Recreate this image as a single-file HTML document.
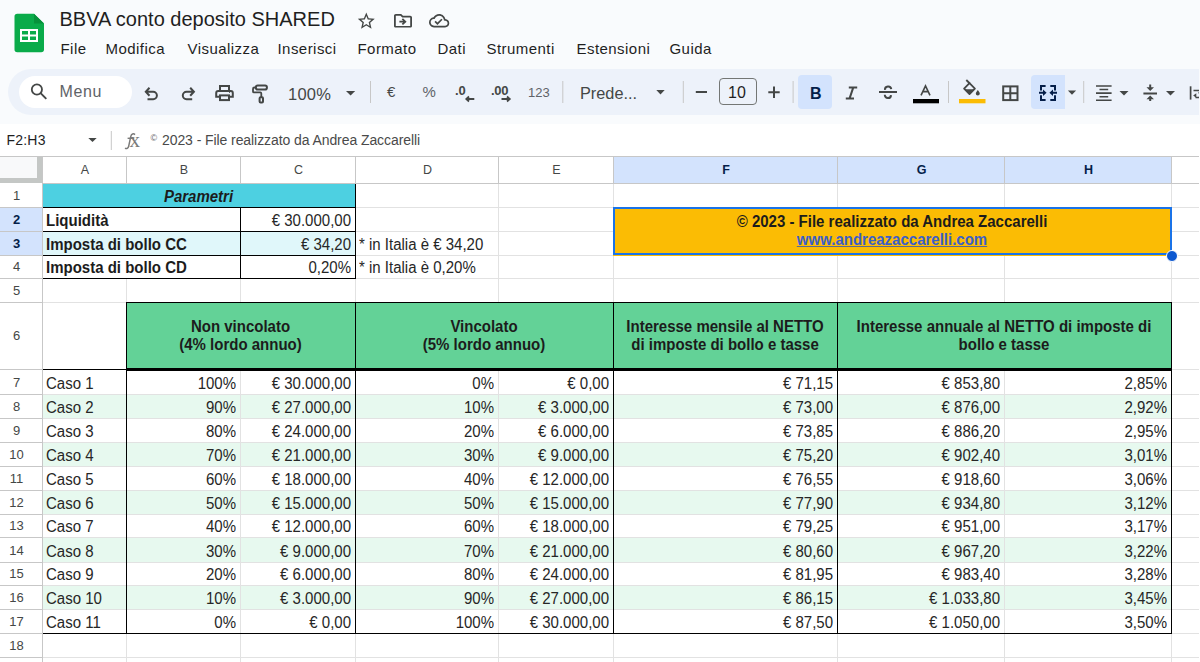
<!DOCTYPE html>
<html><head><meta charset="utf-8"><style>
html,body{margin:0;padding:0;}
body{width:1200px;height:662px;overflow:hidden;position:relative;background:#f9fbfd;font-family:"Liberation Sans", sans-serif;}
div{position:absolute;box-sizing:border-box;}
.t{line-height:20px;white-space:nowrap;height:20px;}
</style></head><body>
<div style="left:0px;top:124px;width:1200px;height:538px;background:#fff;"></div>
<div style="left:0px;top:156px;width:1200px;height:1px;background:#c7c7c7;"></div>
<div style="left:0px;top:157px;width:37px;height:21px;background:#f8f9fa;"></div>
<div style="left:37px;top:157px;width:5px;height:26px;background:#c4c7c5;"></div>
<div style="left:0px;top:178px;width:42px;height:5px;background:#c4c7c5;"></div>
<div style="left:614px;top:157px;width:557px;height:26px;background:#d3e3fd;"></div>
<div style="left:0px;top:208px;width:42px;height:47px;background:#d3e3fd;"></div>
<div style="left:43px;top:184px;width:312px;height:24px;background:#4dd0e1;"></div>
<div style="left:43px;top:231px;width:312px;height:24px;background:#e0f7fa;"></div>
<div style="left:126px;top:302px;width:1045px;height:67px;background:#63d297;"></div>
<div style="left:43px;top:395px;width:1128px;height:23px;background:#e7f9ef;"></div>
<div style="left:43px;top:443px;width:1128px;height:23px;background:#e7f9ef;"></div>
<div style="left:43px;top:491px;width:1128px;height:23px;background:#e7f9ef;"></div>
<div style="left:43px;top:538px;width:1128px;height:24px;background:#e7f9ef;"></div>
<div style="left:43px;top:586px;width:1128px;height:23px;background:#e7f9ef;"></div>
<div style="left:42px;top:157px;width:1px;height:26px;background:#c7c7c7;"></div>
<div style="left:42px;top:184px;width:1px;height:478px;background:#e2e2e2;"></div>
<div style="left:126px;top:157px;width:1px;height:26px;background:#c7c7c7;"></div>
<div style="left:126px;top:184px;width:1px;height:478px;background:#e2e2e2;"></div>
<div style="left:240px;top:157px;width:1px;height:26px;background:#c7c7c7;"></div>
<div style="left:240px;top:184px;width:1px;height:478px;background:#e2e2e2;"></div>
<div style="left:355px;top:157px;width:1px;height:26px;background:#c7c7c7;"></div>
<div style="left:355px;top:184px;width:1px;height:478px;background:#e2e2e2;"></div>
<div style="left:498px;top:157px;width:1px;height:26px;background:#c7c7c7;"></div>
<div style="left:498px;top:184px;width:1px;height:478px;background:#e2e2e2;"></div>
<div style="left:613px;top:157px;width:1px;height:26px;background:#c7c7c7;"></div>
<div style="left:613px;top:184px;width:1px;height:478px;background:#e2e2e2;"></div>
<div style="left:837px;top:157px;width:1px;height:26px;background:#c7c7c7;"></div>
<div style="left:837px;top:184px;width:1px;height:478px;background:#e2e2e2;"></div>
<div style="left:1004px;top:157px;width:1px;height:26px;background:#c7c7c7;"></div>
<div style="left:1004px;top:184px;width:1px;height:478px;background:#e2e2e2;"></div>
<div style="left:1171px;top:157px;width:1px;height:26px;background:#c7c7c7;"></div>
<div style="left:1171px;top:184px;width:1px;height:478px;background:#e2e2e2;"></div>
<div style="left:42px;top:184px;width:1px;height:478px;background:#c7c7c7;"></div>
<div style="left:43px;top:207px;width:1200px;height:1px;background:#e2e2e2;"></div>
<div style="left:0px;top:207px;width:42px;height:1px;background:#c7c7c7;"></div>
<div style="left:43px;top:231px;width:1200px;height:1px;background:#e2e2e2;"></div>
<div style="left:0px;top:231px;width:42px;height:1px;background:#c7c7c7;"></div>
<div style="left:43px;top:255px;width:1200px;height:1px;background:#e2e2e2;"></div>
<div style="left:0px;top:255px;width:42px;height:1px;background:#c7c7c7;"></div>
<div style="left:43px;top:278px;width:1200px;height:1px;background:#e2e2e2;"></div>
<div style="left:0px;top:278px;width:42px;height:1px;background:#c7c7c7;"></div>
<div style="left:43px;top:302px;width:1200px;height:1px;background:#e2e2e2;"></div>
<div style="left:0px;top:302px;width:42px;height:1px;background:#c7c7c7;"></div>
<div style="left:43px;top:369px;width:1200px;height:1px;background:#e2e2e2;"></div>
<div style="left:0px;top:369px;width:42px;height:1px;background:#c7c7c7;"></div>
<div style="left:43px;top:394px;width:1200px;height:1px;background:#e2e2e2;"></div>
<div style="left:0px;top:394px;width:42px;height:1px;background:#c7c7c7;"></div>
<div style="left:43px;top:418px;width:1200px;height:1px;background:#e2e2e2;"></div>
<div style="left:0px;top:418px;width:42px;height:1px;background:#c7c7c7;"></div>
<div style="left:43px;top:442px;width:1200px;height:1px;background:#e2e2e2;"></div>
<div style="left:0px;top:442px;width:42px;height:1px;background:#c7c7c7;"></div>
<div style="left:43px;top:466px;width:1200px;height:1px;background:#e2e2e2;"></div>
<div style="left:0px;top:466px;width:42px;height:1px;background:#c7c7c7;"></div>
<div style="left:43px;top:490px;width:1200px;height:1px;background:#e2e2e2;"></div>
<div style="left:0px;top:490px;width:42px;height:1px;background:#c7c7c7;"></div>
<div style="left:43px;top:514px;width:1200px;height:1px;background:#e2e2e2;"></div>
<div style="left:0px;top:514px;width:42px;height:1px;background:#c7c7c7;"></div>
<div style="left:43px;top:537px;width:1200px;height:1px;background:#e2e2e2;"></div>
<div style="left:0px;top:537px;width:42px;height:1px;background:#c7c7c7;"></div>
<div style="left:43px;top:562px;width:1200px;height:1px;background:#e2e2e2;"></div>
<div style="left:0px;top:562px;width:42px;height:1px;background:#c7c7c7;"></div>
<div style="left:43px;top:585px;width:1200px;height:1px;background:#e2e2e2;"></div>
<div style="left:0px;top:585px;width:42px;height:1px;background:#c7c7c7;"></div>
<div style="left:43px;top:609px;width:1200px;height:1px;background:#e2e2e2;"></div>
<div style="left:0px;top:609px;width:42px;height:1px;background:#c7c7c7;"></div>
<div style="left:43px;top:633px;width:1200px;height:1px;background:#e2e2e2;"></div>
<div style="left:0px;top:633px;width:42px;height:1px;background:#c7c7c7;"></div>
<div style="left:43px;top:657px;width:1200px;height:1px;background:#e2e2e2;"></div>
<div style="left:0px;top:657px;width:42px;height:1px;background:#c7c7c7;"></div>
<div style="left:42px;top:183px;width:1200px;height:1px;background:#c7c7c7;"></div>
<div style="left:43px;top:184px;width:312px;height:23px;background:#4dd0e1;"></div>
<div style="left:127px;top:303px;width:228px;height:66px;background:#63d297;"></div>
<div style="left:356px;top:303px;width:257px;height:66px;background:#63d297;"></div>
<div style="left:614px;top:303px;width:223px;height:66px;background:#63d297;"></div>
<div style="left:838px;top:303px;width:333px;height:66px;background:#63d297;"></div>
<div style="left:126px;top:208px;width:1px;height:23px;background:#fff;"></div>
<div style="left:126px;top:232px;width:1px;height:23px;background:#e0f7fa;"></div>
<div style="left:126px;top:256px;width:1px;height:22px;background:#fff;"></div>
<div style="left:613px;top:207px;width:559px;height:49px;background:#fbbc04;"></div>
<div style="left:43px;top:207px;width:313px;height:1px;background:#000;"></div>
<div style="left:43px;top:231px;width:313px;height:1px;background:#000;"></div>
<div style="left:43px;top:255px;width:313px;height:1px;background:#000;"></div>
<div style="left:43px;top:278px;width:313px;height:1px;background:#000;"></div>
<div style="left:240px;top:207px;width:1px;height:72px;background:#000;"></div>
<div style="left:355px;top:207px;width:1px;height:72px;background:#000;"></div>
<div style="left:355px;top:184px;width:1px;height:24px;background:#000;"></div>
<div style="left:126px;top:302px;width:1046px;height:1px;background:#000;"></div>
<div style="left:126px;top:368px;width:1046px;height:3px;background:#000;"></div>
<div style="left:43px;top:369px;width:84px;height:1px;background:#000;"></div>
<div style="left:43px;top:633px;width:1129px;height:1px;background:#000;"></div>
<div style="left:126px;top:302px;width:1px;height:332px;background:#000;"></div>
<div style="left:355px;top:302px;width:1px;height:332px;background:#000;"></div>
<div style="left:613px;top:302px;width:1px;height:332px;background:#000;"></div>
<div style="left:837px;top:302px;width:1px;height:332px;background:#000;"></div>
<div style="left:1171px;top:302px;width:1px;height:332px;background:#000;"></div>
<div style="left:613px;top:207px;width:559px;height:48px;border:2px solid #1a73e8;"></div>
<div style="left:1165.5px;top:249.5px;width:12px;height:12px;border-radius:50%;background:#0b57d0;border:1px solid #fff;"></div>
<div class="t" style="left:43px;width:84px;text-align:center;top:160.0px;font-size:12.5px;font-weight:normal;font-style:normal;color:#444746;">A</div>
<div class="t" style="left:127px;width:114px;text-align:center;top:160.0px;font-size:12.5px;font-weight:normal;font-style:normal;color:#444746;">B</div>
<div class="t" style="left:241px;width:115px;text-align:center;top:160.0px;font-size:12.5px;font-weight:normal;font-style:normal;color:#444746;">C</div>
<div class="t" style="left:356px;width:143px;text-align:center;top:160.0px;font-size:12.5px;font-weight:normal;font-style:normal;color:#444746;">D</div>
<div class="t" style="left:499px;width:115px;text-align:center;top:160.0px;font-size:12.5px;font-weight:normal;font-style:normal;color:#444746;">E</div>
<div class="t" style="left:614px;width:224px;text-align:center;top:160.0px;font-size:12.5px;font-weight:bold;font-style:normal;color:#041e49;">F</div>
<div class="t" style="left:838px;width:167px;text-align:center;top:160.0px;font-size:12.5px;font-weight:bold;font-style:normal;color:#041e49;">G</div>
<div class="t" style="left:1005px;width:167px;text-align:center;top:160.0px;font-size:12.5px;font-weight:bold;font-style:normal;color:#041e49;">H</div>
<div class="t" style="left:-5px;width:43px;text-align:center;top:185.5px;font-size:13px;font-weight:normal;font-style:normal;color:#444746;">1</div>
<div class="t" style="left:-5px;width:43px;text-align:center;top:209.5px;font-size:13px;font-weight:bold;font-style:normal;color:#041e49;">2</div>
<div class="t" style="left:-5px;width:43px;text-align:center;top:233.5px;font-size:13px;font-weight:bold;font-style:normal;color:#041e49;">3</div>
<div class="t" style="left:-5px;width:43px;text-align:center;top:256.5px;font-size:13px;font-weight:normal;font-style:normal;color:#444746;">4</div>
<div class="t" style="left:-5px;width:43px;text-align:center;top:280.5px;font-size:13px;font-weight:normal;font-style:normal;color:#444746;">5</div>
<div class="t" style="left:-5px;width:43px;text-align:center;top:325.5px;font-size:13px;font-weight:normal;font-style:normal;color:#444746;">6</div>
<div class="t" style="left:-5px;width:43px;text-align:center;top:372.5px;font-size:13px;font-weight:normal;font-style:normal;color:#444746;">7</div>
<div class="t" style="left:-5px;width:43px;text-align:center;top:396.5px;font-size:13px;font-weight:normal;font-style:normal;color:#444746;">8</div>
<div class="t" style="left:-5px;width:43px;text-align:center;top:420.5px;font-size:13px;font-weight:normal;font-style:normal;color:#444746;">9</div>
<div class="t" style="left:-5px;width:43px;text-align:center;top:444.5px;font-size:13px;font-weight:normal;font-style:normal;color:#444746;">10</div>
<div class="t" style="left:-5px;width:43px;text-align:center;top:468.5px;font-size:13px;font-weight:normal;font-style:normal;color:#444746;">11</div>
<div class="t" style="left:-5px;width:43px;text-align:center;top:492.5px;font-size:13px;font-weight:normal;font-style:normal;color:#444746;">12</div>
<div class="t" style="left:-5px;width:43px;text-align:center;top:515.5px;font-size:13px;font-weight:normal;font-style:normal;color:#444746;">13</div>
<div class="t" style="left:-5px;width:43px;text-align:center;top:540.5px;font-size:13px;font-weight:normal;font-style:normal;color:#444746;">14</div>
<div class="t" style="left:-5px;width:43px;text-align:center;top:563.5px;font-size:13px;font-weight:normal;font-style:normal;color:#444746;">15</div>
<div class="t" style="left:-5px;width:43px;text-align:center;top:587.5px;font-size:13px;font-weight:normal;font-style:normal;color:#444746;">16</div>
<div class="t" style="left:-5px;width:43px;text-align:center;top:611.5px;font-size:13px;font-weight:normal;font-style:normal;color:#444746;">17</div>
<div class="t" style="left:-5px;width:43px;text-align:center;top:635.5px;font-size:13px;font-weight:normal;font-style:normal;color:#444746;">18</div>
<div class="t" style="left:42px;width:313px;text-align:center;top:186.5px;font-size:16px;font-weight:bold;font-style:italic;color:#1c1c1c;transform:scaleX(0.9375);transform-origin:50% 0;">Parametri</div>
<div class="t" style="left:46px;top:210.5px;font-size:16px;font-weight:bold;font-style:normal;color:#1c1c1c;transform:scaleX(0.9375);transform-origin:0 0;">Liquidità</div>
<div class="t" style="left:46px;top:234.5px;font-size:16px;font-weight:bold;font-style:normal;color:#1c1c1c;transform:scaleX(0.9375);transform-origin:0 0;">Imposta di bollo CC</div>
<div class="t" style="left:46px;top:257.5px;font-size:16px;font-weight:bold;font-style:normal;color:#1c1c1c;transform:scaleX(0.9375);transform-origin:0 0;">Imposta di bollo CD</div>
<div class="t" style="left:240px;width:111px;text-align:right;top:210.5px;font-size:16px;font-weight:normal;font-style:normal;color:#262626;transform:scaleX(0.9375);transform-origin:100% 0;">€ 30.000,00</div>
<div class="t" style="left:240px;width:111px;text-align:right;top:234.5px;font-size:16px;font-weight:normal;font-style:normal;color:#262626;transform:scaleX(0.9375);transform-origin:100% 0;">€ 34,20</div>
<div class="t" style="left:240px;width:111px;text-align:right;top:257.5px;font-size:16px;font-weight:normal;font-style:normal;color:#262626;transform:scaleX(0.9375);transform-origin:100% 0;">0,20%</div>
<div class="t" style="left:359px;top:234.5px;font-size:16px;font-weight:normal;font-style:normal;color:#262626;transform:scaleX(0.9375);transform-origin:0 0;">* in Italia è € 34,20</div>
<div class="t" style="left:359px;top:257.5px;font-size:16px;font-weight:normal;font-style:normal;color:#262626;transform:scaleX(0.9375);transform-origin:0 0;">* in Italia è 0,20%</div>
<div class="t" style="left:613px;width:558px;text-align:center;top:211.5px;font-size:16px;font-weight:bold;font-style:normal;color:#1c1c1c;transform:scaleX(0.9375);transform-origin:50% 0;">© 2023 - File realizzato da Andrea Zaccarelli</div>
<div class="t" style="left:613px;width:558px;text-align:center;top:229.5px;font-size:16px;font-weight:bold;font-style:normal;color:#3b5fc8;text-decoration:underline;text-decoration-color:#5a6a90;transform:scaleX(0.9375);transform-origin:50% 0;">www.andreazaccarelli.com</div>
<div class="t" style="left:126px;width:229px;text-align:center;top:316.5px;font-size:16px;font-weight:bold;font-style:normal;color:#1c1c1c;transform:scaleX(0.9375);transform-origin:50% 0;">Non vincolato</div>
<div class="t" style="left:126px;width:229px;text-align:center;top:334.5px;font-size:16px;font-weight:bold;font-style:normal;color:#1c1c1c;transform:scaleX(0.9375);transform-origin:50% 0;">(4% lordo annuo)</div>
<div class="t" style="left:355px;width:258px;text-align:center;top:316.5px;font-size:16px;font-weight:bold;font-style:normal;color:#1c1c1c;transform:scaleX(0.9375);transform-origin:50% 0;">Vincolato</div>
<div class="t" style="left:355px;width:258px;text-align:center;top:334.5px;font-size:16px;font-weight:bold;font-style:normal;color:#1c1c1c;transform:scaleX(0.9375);transform-origin:50% 0;">(5% lordo annuo)</div>
<div class="t" style="left:613px;width:224px;text-align:center;top:316.5px;font-size:16px;font-weight:bold;font-style:normal;color:#1c1c1c;transform:scaleX(0.9375);transform-origin:50% 0;">Interesse mensile al NETTO</div>
<div class="t" style="left:613px;width:224px;text-align:center;top:334.5px;font-size:16px;font-weight:bold;font-style:normal;color:#1c1c1c;transform:scaleX(0.9375);transform-origin:50% 0;">di imposte di bollo e tasse</div>
<div class="t" style="left:837px;width:334px;text-align:center;top:316.5px;font-size:16px;font-weight:bold;font-style:normal;color:#1c1c1c;transform:scaleX(0.9375);transform-origin:50% 0;">Interesse annuale al NETTO di imposte di</div>
<div class="t" style="left:837px;width:334px;text-align:center;top:334.5px;font-size:16px;font-weight:bold;font-style:normal;color:#1c1c1c;transform:scaleX(0.9375);transform-origin:50% 0;">bollo e tasse</div>
<div class="t" style="left:46px;top:373.5px;font-size:16px;font-weight:normal;font-style:normal;color:#262626;transform:scaleX(0.9375);transform-origin:0 0;">Caso 1</div>
<div class="t" style="left:126px;width:110px;text-align:right;top:373.5px;font-size:16px;font-weight:normal;font-style:normal;color:#262626;transform:scaleX(0.9375);transform-origin:100% 0;">100%</div>
<div class="t" style="left:240px;width:111px;text-align:right;top:373.5px;font-size:16px;font-weight:normal;font-style:normal;color:#262626;transform:scaleX(0.9375);transform-origin:100% 0;">€ 30.000,00</div>
<div class="t" style="left:355px;width:139px;text-align:right;top:373.5px;font-size:16px;font-weight:normal;font-style:normal;color:#262626;transform:scaleX(0.9375);transform-origin:100% 0;">0%</div>
<div class="t" style="left:498px;width:111px;text-align:right;top:373.5px;font-size:16px;font-weight:normal;font-style:normal;color:#262626;transform:scaleX(0.9375);transform-origin:100% 0;">€ 0,00</div>
<div class="t" style="left:613px;width:220px;text-align:right;top:373.5px;font-size:16px;font-weight:normal;font-style:normal;color:#262626;transform:scaleX(0.9375);transform-origin:100% 0;">€ 71,15</div>
<div class="t" style="left:837px;width:163px;text-align:right;top:373.5px;font-size:16px;font-weight:normal;font-style:normal;color:#262626;transform:scaleX(0.9375);transform-origin:100% 0;">€ 853,80</div>
<div class="t" style="left:1004px;width:163px;text-align:right;top:373.5px;font-size:16px;font-weight:normal;font-style:normal;color:#262626;transform:scaleX(0.9375);transform-origin:100% 0;">2,85%</div>
<div class="t" style="left:46px;top:397.5px;font-size:16px;font-weight:normal;font-style:normal;color:#262626;transform:scaleX(0.9375);transform-origin:0 0;">Caso 2</div>
<div class="t" style="left:126px;width:110px;text-align:right;top:397.5px;font-size:16px;font-weight:normal;font-style:normal;color:#262626;transform:scaleX(0.9375);transform-origin:100% 0;">90%</div>
<div class="t" style="left:240px;width:111px;text-align:right;top:397.5px;font-size:16px;font-weight:normal;font-style:normal;color:#262626;transform:scaleX(0.9375);transform-origin:100% 0;">€ 27.000,00</div>
<div class="t" style="left:355px;width:139px;text-align:right;top:397.5px;font-size:16px;font-weight:normal;font-style:normal;color:#262626;transform:scaleX(0.9375);transform-origin:100% 0;">10%</div>
<div class="t" style="left:498px;width:111px;text-align:right;top:397.5px;font-size:16px;font-weight:normal;font-style:normal;color:#262626;transform:scaleX(0.9375);transform-origin:100% 0;">€ 3.000,00</div>
<div class="t" style="left:613px;width:220px;text-align:right;top:397.5px;font-size:16px;font-weight:normal;font-style:normal;color:#262626;transform:scaleX(0.9375);transform-origin:100% 0;">€ 73,00</div>
<div class="t" style="left:837px;width:163px;text-align:right;top:397.5px;font-size:16px;font-weight:normal;font-style:normal;color:#262626;transform:scaleX(0.9375);transform-origin:100% 0;">€ 876,00</div>
<div class="t" style="left:1004px;width:163px;text-align:right;top:397.5px;font-size:16px;font-weight:normal;font-style:normal;color:#262626;transform:scaleX(0.9375);transform-origin:100% 0;">2,92%</div>
<div class="t" style="left:46px;top:421.5px;font-size:16px;font-weight:normal;font-style:normal;color:#262626;transform:scaleX(0.9375);transform-origin:0 0;">Caso 3</div>
<div class="t" style="left:126px;width:110px;text-align:right;top:421.5px;font-size:16px;font-weight:normal;font-style:normal;color:#262626;transform:scaleX(0.9375);transform-origin:100% 0;">80%</div>
<div class="t" style="left:240px;width:111px;text-align:right;top:421.5px;font-size:16px;font-weight:normal;font-style:normal;color:#262626;transform:scaleX(0.9375);transform-origin:100% 0;">€ 24.000,00</div>
<div class="t" style="left:355px;width:139px;text-align:right;top:421.5px;font-size:16px;font-weight:normal;font-style:normal;color:#262626;transform:scaleX(0.9375);transform-origin:100% 0;">20%</div>
<div class="t" style="left:498px;width:111px;text-align:right;top:421.5px;font-size:16px;font-weight:normal;font-style:normal;color:#262626;transform:scaleX(0.9375);transform-origin:100% 0;">€ 6.000,00</div>
<div class="t" style="left:613px;width:220px;text-align:right;top:421.5px;font-size:16px;font-weight:normal;font-style:normal;color:#262626;transform:scaleX(0.9375);transform-origin:100% 0;">€ 73,85</div>
<div class="t" style="left:837px;width:163px;text-align:right;top:421.5px;font-size:16px;font-weight:normal;font-style:normal;color:#262626;transform:scaleX(0.9375);transform-origin:100% 0;">€ 886,20</div>
<div class="t" style="left:1004px;width:163px;text-align:right;top:421.5px;font-size:16px;font-weight:normal;font-style:normal;color:#262626;transform:scaleX(0.9375);transform-origin:100% 0;">2,95%</div>
<div class="t" style="left:46px;top:445.5px;font-size:16px;font-weight:normal;font-style:normal;color:#262626;transform:scaleX(0.9375);transform-origin:0 0;">Caso 4</div>
<div class="t" style="left:126px;width:110px;text-align:right;top:445.5px;font-size:16px;font-weight:normal;font-style:normal;color:#262626;transform:scaleX(0.9375);transform-origin:100% 0;">70%</div>
<div class="t" style="left:240px;width:111px;text-align:right;top:445.5px;font-size:16px;font-weight:normal;font-style:normal;color:#262626;transform:scaleX(0.9375);transform-origin:100% 0;">€ 21.000,00</div>
<div class="t" style="left:355px;width:139px;text-align:right;top:445.5px;font-size:16px;font-weight:normal;font-style:normal;color:#262626;transform:scaleX(0.9375);transform-origin:100% 0;">30%</div>
<div class="t" style="left:498px;width:111px;text-align:right;top:445.5px;font-size:16px;font-weight:normal;font-style:normal;color:#262626;transform:scaleX(0.9375);transform-origin:100% 0;">€ 9.000,00</div>
<div class="t" style="left:613px;width:220px;text-align:right;top:445.5px;font-size:16px;font-weight:normal;font-style:normal;color:#262626;transform:scaleX(0.9375);transform-origin:100% 0;">€ 75,20</div>
<div class="t" style="left:837px;width:163px;text-align:right;top:445.5px;font-size:16px;font-weight:normal;font-style:normal;color:#262626;transform:scaleX(0.9375);transform-origin:100% 0;">€ 902,40</div>
<div class="t" style="left:1004px;width:163px;text-align:right;top:445.5px;font-size:16px;font-weight:normal;font-style:normal;color:#262626;transform:scaleX(0.9375);transform-origin:100% 0;">3,01%</div>
<div class="t" style="left:46px;top:469.5px;font-size:16px;font-weight:normal;font-style:normal;color:#262626;transform:scaleX(0.9375);transform-origin:0 0;">Caso 5</div>
<div class="t" style="left:126px;width:110px;text-align:right;top:469.5px;font-size:16px;font-weight:normal;font-style:normal;color:#262626;transform:scaleX(0.9375);transform-origin:100% 0;">60%</div>
<div class="t" style="left:240px;width:111px;text-align:right;top:469.5px;font-size:16px;font-weight:normal;font-style:normal;color:#262626;transform:scaleX(0.9375);transform-origin:100% 0;">€ 18.000,00</div>
<div class="t" style="left:355px;width:139px;text-align:right;top:469.5px;font-size:16px;font-weight:normal;font-style:normal;color:#262626;transform:scaleX(0.9375);transform-origin:100% 0;">40%</div>
<div class="t" style="left:498px;width:111px;text-align:right;top:469.5px;font-size:16px;font-weight:normal;font-style:normal;color:#262626;transform:scaleX(0.9375);transform-origin:100% 0;">€ 12.000,00</div>
<div class="t" style="left:613px;width:220px;text-align:right;top:469.5px;font-size:16px;font-weight:normal;font-style:normal;color:#262626;transform:scaleX(0.9375);transform-origin:100% 0;">€ 76,55</div>
<div class="t" style="left:837px;width:163px;text-align:right;top:469.5px;font-size:16px;font-weight:normal;font-style:normal;color:#262626;transform:scaleX(0.9375);transform-origin:100% 0;">€ 918,60</div>
<div class="t" style="left:1004px;width:163px;text-align:right;top:469.5px;font-size:16px;font-weight:normal;font-style:normal;color:#262626;transform:scaleX(0.9375);transform-origin:100% 0;">3,06%</div>
<div class="t" style="left:46px;top:493.5px;font-size:16px;font-weight:normal;font-style:normal;color:#262626;transform:scaleX(0.9375);transform-origin:0 0;">Caso 6</div>
<div class="t" style="left:126px;width:110px;text-align:right;top:493.5px;font-size:16px;font-weight:normal;font-style:normal;color:#262626;transform:scaleX(0.9375);transform-origin:100% 0;">50%</div>
<div class="t" style="left:240px;width:111px;text-align:right;top:493.5px;font-size:16px;font-weight:normal;font-style:normal;color:#262626;transform:scaleX(0.9375);transform-origin:100% 0;">€ 15.000,00</div>
<div class="t" style="left:355px;width:139px;text-align:right;top:493.5px;font-size:16px;font-weight:normal;font-style:normal;color:#262626;transform:scaleX(0.9375);transform-origin:100% 0;">50%</div>
<div class="t" style="left:498px;width:111px;text-align:right;top:493.5px;font-size:16px;font-weight:normal;font-style:normal;color:#262626;transform:scaleX(0.9375);transform-origin:100% 0;">€ 15.000,00</div>
<div class="t" style="left:613px;width:220px;text-align:right;top:493.5px;font-size:16px;font-weight:normal;font-style:normal;color:#262626;transform:scaleX(0.9375);transform-origin:100% 0;">€ 77,90</div>
<div class="t" style="left:837px;width:163px;text-align:right;top:493.5px;font-size:16px;font-weight:normal;font-style:normal;color:#262626;transform:scaleX(0.9375);transform-origin:100% 0;">€ 934,80</div>
<div class="t" style="left:1004px;width:163px;text-align:right;top:493.5px;font-size:16px;font-weight:normal;font-style:normal;color:#262626;transform:scaleX(0.9375);transform-origin:100% 0;">3,12%</div>
<div class="t" style="left:46px;top:516.5px;font-size:16px;font-weight:normal;font-style:normal;color:#262626;transform:scaleX(0.9375);transform-origin:0 0;">Caso 7</div>
<div class="t" style="left:126px;width:110px;text-align:right;top:516.5px;font-size:16px;font-weight:normal;font-style:normal;color:#262626;transform:scaleX(0.9375);transform-origin:100% 0;">40%</div>
<div class="t" style="left:240px;width:111px;text-align:right;top:516.5px;font-size:16px;font-weight:normal;font-style:normal;color:#262626;transform:scaleX(0.9375);transform-origin:100% 0;">€ 12.000,00</div>
<div class="t" style="left:355px;width:139px;text-align:right;top:516.5px;font-size:16px;font-weight:normal;font-style:normal;color:#262626;transform:scaleX(0.9375);transform-origin:100% 0;">60%</div>
<div class="t" style="left:498px;width:111px;text-align:right;top:516.5px;font-size:16px;font-weight:normal;font-style:normal;color:#262626;transform:scaleX(0.9375);transform-origin:100% 0;">€ 18.000,00</div>
<div class="t" style="left:613px;width:220px;text-align:right;top:516.5px;font-size:16px;font-weight:normal;font-style:normal;color:#262626;transform:scaleX(0.9375);transform-origin:100% 0;">€ 79,25</div>
<div class="t" style="left:837px;width:163px;text-align:right;top:516.5px;font-size:16px;font-weight:normal;font-style:normal;color:#262626;transform:scaleX(0.9375);transform-origin:100% 0;">€ 951,00</div>
<div class="t" style="left:1004px;width:163px;text-align:right;top:516.5px;font-size:16px;font-weight:normal;font-style:normal;color:#262626;transform:scaleX(0.9375);transform-origin:100% 0;">3,17%</div>
<div class="t" style="left:46px;top:541.5px;font-size:16px;font-weight:normal;font-style:normal;color:#262626;transform:scaleX(0.9375);transform-origin:0 0;">Caso 8</div>
<div class="t" style="left:126px;width:110px;text-align:right;top:541.5px;font-size:16px;font-weight:normal;font-style:normal;color:#262626;transform:scaleX(0.9375);transform-origin:100% 0;">30%</div>
<div class="t" style="left:240px;width:111px;text-align:right;top:541.5px;font-size:16px;font-weight:normal;font-style:normal;color:#262626;transform:scaleX(0.9375);transform-origin:100% 0;">€ 9.000,00</div>
<div class="t" style="left:355px;width:139px;text-align:right;top:541.5px;font-size:16px;font-weight:normal;font-style:normal;color:#262626;transform:scaleX(0.9375);transform-origin:100% 0;">70%</div>
<div class="t" style="left:498px;width:111px;text-align:right;top:541.5px;font-size:16px;font-weight:normal;font-style:normal;color:#262626;transform:scaleX(0.9375);transform-origin:100% 0;">€ 21.000,00</div>
<div class="t" style="left:613px;width:220px;text-align:right;top:541.5px;font-size:16px;font-weight:normal;font-style:normal;color:#262626;transform:scaleX(0.9375);transform-origin:100% 0;">€ 80,60</div>
<div class="t" style="left:837px;width:163px;text-align:right;top:541.5px;font-size:16px;font-weight:normal;font-style:normal;color:#262626;transform:scaleX(0.9375);transform-origin:100% 0;">€ 967,20</div>
<div class="t" style="left:1004px;width:163px;text-align:right;top:541.5px;font-size:16px;font-weight:normal;font-style:normal;color:#262626;transform:scaleX(0.9375);transform-origin:100% 0;">3,22%</div>
<div class="t" style="left:46px;top:564.5px;font-size:16px;font-weight:normal;font-style:normal;color:#262626;transform:scaleX(0.9375);transform-origin:0 0;">Caso 9</div>
<div class="t" style="left:126px;width:110px;text-align:right;top:564.5px;font-size:16px;font-weight:normal;font-style:normal;color:#262626;transform:scaleX(0.9375);transform-origin:100% 0;">20%</div>
<div class="t" style="left:240px;width:111px;text-align:right;top:564.5px;font-size:16px;font-weight:normal;font-style:normal;color:#262626;transform:scaleX(0.9375);transform-origin:100% 0;">€ 6.000,00</div>
<div class="t" style="left:355px;width:139px;text-align:right;top:564.5px;font-size:16px;font-weight:normal;font-style:normal;color:#262626;transform:scaleX(0.9375);transform-origin:100% 0;">80%</div>
<div class="t" style="left:498px;width:111px;text-align:right;top:564.5px;font-size:16px;font-weight:normal;font-style:normal;color:#262626;transform:scaleX(0.9375);transform-origin:100% 0;">€ 24.000,00</div>
<div class="t" style="left:613px;width:220px;text-align:right;top:564.5px;font-size:16px;font-weight:normal;font-style:normal;color:#262626;transform:scaleX(0.9375);transform-origin:100% 0;">€ 81,95</div>
<div class="t" style="left:837px;width:163px;text-align:right;top:564.5px;font-size:16px;font-weight:normal;font-style:normal;color:#262626;transform:scaleX(0.9375);transform-origin:100% 0;">€ 983,40</div>
<div class="t" style="left:1004px;width:163px;text-align:right;top:564.5px;font-size:16px;font-weight:normal;font-style:normal;color:#262626;transform:scaleX(0.9375);transform-origin:100% 0;">3,28%</div>
<div class="t" style="left:46px;top:588.5px;font-size:16px;font-weight:normal;font-style:normal;color:#262626;transform:scaleX(0.9375);transform-origin:0 0;">Caso 10</div>
<div class="t" style="left:126px;width:110px;text-align:right;top:588.5px;font-size:16px;font-weight:normal;font-style:normal;color:#262626;transform:scaleX(0.9375);transform-origin:100% 0;">10%</div>
<div class="t" style="left:240px;width:111px;text-align:right;top:588.5px;font-size:16px;font-weight:normal;font-style:normal;color:#262626;transform:scaleX(0.9375);transform-origin:100% 0;">€ 3.000,00</div>
<div class="t" style="left:355px;width:139px;text-align:right;top:588.5px;font-size:16px;font-weight:normal;font-style:normal;color:#262626;transform:scaleX(0.9375);transform-origin:100% 0;">90%</div>
<div class="t" style="left:498px;width:111px;text-align:right;top:588.5px;font-size:16px;font-weight:normal;font-style:normal;color:#262626;transform:scaleX(0.9375);transform-origin:100% 0;">€ 27.000,00</div>
<div class="t" style="left:613px;width:220px;text-align:right;top:588.5px;font-size:16px;font-weight:normal;font-style:normal;color:#262626;transform:scaleX(0.9375);transform-origin:100% 0;">€ 86,15</div>
<div class="t" style="left:837px;width:163px;text-align:right;top:588.5px;font-size:16px;font-weight:normal;font-style:normal;color:#262626;transform:scaleX(0.9375);transform-origin:100% 0;">€ 1.033,80</div>
<div class="t" style="left:1004px;width:163px;text-align:right;top:588.5px;font-size:16px;font-weight:normal;font-style:normal;color:#262626;transform:scaleX(0.9375);transform-origin:100% 0;">3,45%</div>
<div class="t" style="left:46px;top:612.5px;font-size:16px;font-weight:normal;font-style:normal;color:#262626;transform:scaleX(0.9375);transform-origin:0 0;">Caso 11</div>
<div class="t" style="left:126px;width:110px;text-align:right;top:612.5px;font-size:16px;font-weight:normal;font-style:normal;color:#262626;transform:scaleX(0.9375);transform-origin:100% 0;">0%</div>
<div class="t" style="left:240px;width:111px;text-align:right;top:612.5px;font-size:16px;font-weight:normal;font-style:normal;color:#262626;transform:scaleX(0.9375);transform-origin:100% 0;">€ 0,00</div>
<div class="t" style="left:355px;width:139px;text-align:right;top:612.5px;font-size:16px;font-weight:normal;font-style:normal;color:#262626;transform:scaleX(0.9375);transform-origin:100% 0;">100%</div>
<div class="t" style="left:498px;width:111px;text-align:right;top:612.5px;font-size:16px;font-weight:normal;font-style:normal;color:#262626;transform:scaleX(0.9375);transform-origin:100% 0;">€ 30.000,00</div>
<div class="t" style="left:613px;width:220px;text-align:right;top:612.5px;font-size:16px;font-weight:normal;font-style:normal;color:#262626;transform:scaleX(0.9375);transform-origin:100% 0;">€ 87,50</div>
<div class="t" style="left:837px;width:163px;text-align:right;top:612.5px;font-size:16px;font-weight:normal;font-style:normal;color:#262626;transform:scaleX(0.9375);transform-origin:100% 0;">€ 1.050,00</div>
<div class="t" style="left:1004px;width:163px;text-align:right;top:612.5px;font-size:16px;font-weight:normal;font-style:normal;color:#262626;transform:scaleX(0.9375);transform-origin:100% 0;">3,50%</div>
<div style="left:8px;top:69px;width:1250px;height:46px;border-radius:23px;background:#edf2fa;"></div>
<div style="left:19px;top:76px;width:113px;height:32px;border-radius:16px;background:#fff;"></div>
<div style="left:798px;top:75px;width:34px;height:34px;border-radius:4px;background:#d3e3fd;"></div>
<div style="left:1031px;top:75px;width:34px;height:34px;border-radius:4px 0 0 4px;background:#d3e3fd;"></div>
<div style="left:719px;top:78px;width:38px;height:27px;border-radius:4px;border:1px solid #747775;"></div>
<div class="t" style="left:59.5px;top:9.0px;font-size:20px;font-weight:normal;font-style:normal;color:#1f1f1f;">BBVA conto deposito SHARED</div>
<div class="t" style="left:60.5px;top:38.5px;font-size:15px;font-weight:normal;font-style:normal;color:#1f1f1f;letter-spacing:0.45px;">File</div>
<div class="t" style="left:105.5px;top:38.5px;font-size:15px;font-weight:normal;font-style:normal;color:#1f1f1f;letter-spacing:0.45px;">Modifica</div>
<div class="t" style="left:187.5px;top:38.5px;font-size:15px;font-weight:normal;font-style:normal;color:#1f1f1f;letter-spacing:0.45px;">Visualizza</div>
<div class="t" style="left:277.5px;top:38.5px;font-size:15px;font-weight:normal;font-style:normal;color:#1f1f1f;letter-spacing:0.45px;">Inserisci</div>
<div class="t" style="left:357.5px;top:38.5px;font-size:15px;font-weight:normal;font-style:normal;color:#1f1f1f;letter-spacing:0.45px;">Formato</div>
<div class="t" style="left:437.5px;top:38.5px;font-size:15px;font-weight:normal;font-style:normal;color:#1f1f1f;letter-spacing:0.45px;">Dati</div>
<div class="t" style="left:486.5px;top:38.5px;font-size:15px;font-weight:normal;font-style:normal;color:#1f1f1f;letter-spacing:0.45px;">Strumenti</div>
<div class="t" style="left:576.5px;top:38.5px;font-size:15px;font-weight:normal;font-style:normal;color:#1f1f1f;letter-spacing:0.45px;">Estensioni</div>
<div class="t" style="left:669.5px;top:38.5px;font-size:15px;font-weight:normal;font-style:normal;color:#1f1f1f;letter-spacing:0.45px;">Guida</div>
<div class="t" style="left:59.5px;top:81.5px;font-size:16px;font-weight:normal;font-style:normal;color:#5f6368;letter-spacing:0.6px;">Menu</div>
<div class="t" style="left:288px;top:84.0px;font-size:16.5px;font-weight:normal;font-style:normal;color:#444746;letter-spacing:0.2px;">100%</div>
<div class="t" style="left:387px;top:82.0px;font-size:15px;font-weight:normal;font-style:normal;color:#444746;">€</div>
<div class="t" style="left:422.5px;top:82.0px;font-size:15px;font-weight:normal;font-style:normal;color:#5f6368;">%</div>
<div class="t" style="left:528px;top:82.5px;font-size:13px;font-weight:normal;font-style:normal;color:#5f6368;">123</div>
<div class="t" style="left:580px;top:82.5px;font-size:16.3px;font-weight:normal;font-style:normal;color:#444746;">Prede...</div>
<div class="t" style="left:728px;top:82.5px;font-size:16px;font-weight:normal;font-style:normal;color:#1f1f1f;">10</div>
<div class="t" style="left:810px;top:84.0px;font-size:16px;font-weight:bold;font-style:normal;color:#041e49;">B</div>
<div class="t" style="left:455px;top:80.5px;font-size:13px;font-weight:bold;font-style:normal;color:#444746;">.0</div>
<div class="t" style="left:491px;top:80.5px;font-size:13px;font-weight:bold;font-style:normal;color:#444746;letter-spacing:-0.3px;">.00</div>
<div class="t" style="left:6.5px;top:130.0px;font-size:14px;font-weight:normal;font-style:normal;color:#1f1f1f;letter-spacing:0.2px;">F2:H3</div>
<div class="t" style="left:150.5px;top:128.0px;font-size:9px;font-weight:normal;font-style:normal;color:#5f6368;">©</div>
<div class="t" style="left:162px;top:130.0px;font-size:14px;font-weight:normal;font-style:normal;color:#4a4a4a;letter-spacing:-0.08px;">2023 - File realizzato da Andrea Zaccarelli</div>
<svg style="position:absolute;left:0;top:0" width="1200" height="662" viewBox="0 0 1200 662">
<!-- sheets logo -->
<path d="M17.3 13.7 H34 L44 23.5 V49.5 a2.8 2.8 0 0 1 -2.8 2.8 H17.3 a2.8 2.8 0 0 1 -2.8 -2.8 V16.5 a2.8 2.8 0 0 1 2.8 -2.8 Z" fill="#0aab4a"/>
<path d="M34 13.7 L44 23.5 H34 Z" fill="#07913b"/>
<path d="M20 29 H38 V42 H20 Z M22 31 V34.5 H28 V31 Z M30 31 V34.5 H36 V31 Z M22 36.5 V40 H28 V36.5 Z M30 36.5 V40 H36 V36.5 Z" fill="#fff" fill-rule="evenodd"/>
<!-- star -->
<path transform="translate(356.1 10.9) scale(0.85)" fill="#444746" d="M22 9.24l-7.19-.62L12 2 9.19 8.63 2 9.24l5.46 4.73L5.82 21 12 17.27 18.18 21l-1.63-7.03L22 9.24zM12 15.4l-3.76 2.27 1-4.28-3.32-2.88 4.38-.38L12 6.1l1.71 4.04 4.38.38-3.32 2.88 1 4.28L12 15.4z"/>
<!-- folder move -->
<path transform="translate(392.2 10.6) scale(0.9 0.85)" fill="#444746" d="M20 6h-8l-2-2H4c-1.1 0-1.99.9-1.99 2L2 18c0 1.1.9 2 2 2h16c1.1 0 2-.9 2-2V8c0-1.1-.9-2-2-2zm0 12H4V6h5.17l2 2H20v10zm-7.84-6H8v2h4.16l-1.59 1.59L11.99 17 16 13.010 11.990 9l-1.41 1.41L12.16 12z"/>
<!-- cloud done -->
<path transform="translate(429 10.6) scale(0.845 0.84)" fill="#444746" d="M19.35 10.04C18.67 6.59 15.640 4 12 4 9.110 4 6.6 5.64 5.35 8.04 2.34 8.36 0 10.91 0 14c0 3.31 2.69 6 6 6h13c2.76 0 5-2.24 5-5 0-2.64-2.05-4.78-4.65-4.96zM19 18H6c-2.21 0-4-1.79-4-4 0-2.05 1.53-3.76 3.56-3.97l1.07-.11.5-.95C8.08 7.14 9.94 6 12 6c2.62 0 4.88 1.86 5.39 4.43l.3 1.5 1.53.11c1.56.1 2.78 1.41 2.78 2.96 0 1.65-1.35 3-3 3zm-9-3.82l-2.09-2.090L6.5 13.5 10 17l6.01-6.01-1.41-1.41z"/>
</svg>
<svg style="position:absolute;left:0;top:0" width="1200" height="662" viewBox="0 0 1200 662">
<g fill="none" stroke="#444746" stroke-width="2">
<!-- magnifier -->
<circle cx="36.9" cy="89.5" r="5.1" stroke-width="1.8"/>
<path d="M40.6 93.2 L46.3 98.9" stroke-width="1.9"/>
<!-- undo -->
<path d="M149.5 87.8 L145.8 91.8 L149.5 95.8 M146.5 91.8 H153.2 a3.7 3.7 0 0 1 0 7.4 H147.5"/>
<!-- redo -->
<path d="M190.2 87.8 L193.9 91.8 L190.2 95.8 M193.2 91.8 H186.5 a3.7 3.7 0 0 0 0 7.4 H192.2"/>
<!-- print -->
<path d="M220 90.5 V85.9 H229 V90.5"/>
<path d="M219.5 96.8 H216.2 V92.9 a2 2 0 0 1 2 -2 H230.8 a2 2 0 0 1 2 2 V96.8 H229.5"/>
<rect x="220" y="95.4" width="9" height="4.7"/>
<!-- paint format -->
<rect x="255.9" y="85.4" width="11" height="4.2" rx="1.8"/>
<path d="M255.9 87.5 H254.4 a1.4 1.4 0 0 0 -1.4 1.4 V91.4 a1 1 0 0 0 1 1 H260.3 a1 1 0 0 1 1 1 V97" stroke-width="1.8"/>
<rect x="259.6" y="97.2" width="3.4" height="5.2" rx="1"/>
<!-- minus / plus -->
<path d="M695.8 92 H707"/>
<path d="M768.3 92.2 H779.7 M774 86.5 V98"/>
<!-- strikethrough -->
<path d="M879 92 H897"/>
<path d="M885 89.8 a3.1 3.1 0 0 1 6.2 -0.6"/>
<path d="M884.8 94.8 a3.1 3.1 0 0 0 6.2 0.3"/>
<!-- borders -->
<rect x="1003.2" y="86.4" width="14.3" height="13.7"/>
<path d="M1010.3 86.4 V100.1 M1003.2 93.2 H1017.5"/>
<!-- align center -->
<path d="M1096 86 H1111.6 M1099.5 89.5 H1108.2 M1096 93.1 H1111.6 M1099.5 96.8 H1108.2 M1096 100.3 H1111.6" stroke-width="1.6"/>
<!-- valign middle -->
<path d="M1143.4 93.5 H1157"/>
<path d="M1150.2 84.5 V88"/>
<path d="M1150.2 101 V97.5"/>
<!-- wrap partial -->
<path d="M1190.6 86.3 V99.6" stroke-width="1.7"/>
<path d="M1193.5 90.4 H1199 M1198.5 92.8 a2.3 2.3 0 0 1 0 4.6 H1195.5" stroke-width="1.5"/>
</g>
<g fill="#444746">
<!-- dropdown triangles -->
<path d="M346 91 H355.2 L350.6 95.6 Z"/>
<path d="M656.3 90 H664.7 L660.5 94.5 Z"/>
<path d="M1119.5 91 H1128.5 L1124 95.6 Z"/>
<path d="M1166 91 H1175 L1170.5 95.6 Z"/>
<path d="M88.3 138 H96.7 L92.5 142 Z"/>
<path d="M1067.9 90.6 H1076.1 L1072 94.8 Z"/>
</g>
<g fill="#c7c7c7">
<rect x="370" y="81" width="1" height="22"/>
<rect x="562.3" y="81" width="1" height="22"/>
<rect x="682.8" y="81" width="1" height="22"/>
<rect x="792.6" y="81" width="1" height="22"/>
<rect x="948" y="81" width="1" height="22"/>
<rect x="1083.2" y="81" width="1" height="22"/>
<rect x="110.8" y="131" width="1" height="19"/>
</g>
<path d="M1146.5 87.2 H1154 L1150.2 91 Z M1146.5 99.2 H1154 L1150.2 95.4 Z" fill="#444746"/>
<path d="M1196.3 93.2 L1193.2 95.5 L1196.3 97.8 Z" fill="#444746"/>
<rect x="1199" y="0" width="1" height="124" fill="#f9fbfd"/>
<rect x="1199" y="124" width="1" height="538" fill="#ffffff"/>
<circle cx="229.6" cy="92.3" r="0.6" fill="#444746"/>
<!-- italic I -->
<path d="M848.8 87.6 H857.2 M853.2 87.6 L849.6 98.4 M845.8 98.4 H854" fill="none" stroke="#444746" stroke-width="2"/>
<!-- A color bar -->
<rect x="913" y="99" width="26" height="4.3" fill="#000"/>
<path d="M921 95.3 L925.5 85.8 L930 95.3 M922.8 91.6 H928.2" fill="none" stroke="#444746" stroke-width="1.6"/>
<!-- bucket -->
<rect x="959" y="99" width="26.5" height="4.3" fill="#fbbc04"/>
<path d="M966.3 80 L969.8 83.5" fill="none" stroke="#444746" stroke-width="1.8"/>
<path d="M969.5 83.2 L974.9 88.6 L969.5 94 L964.1 88.6 Z" fill="none" stroke="#444746" stroke-width="1.8" stroke-linejoin="round"/>
<path d="M964.5 89.3 H974.5 L969.5 94.3 Z" fill="#444746"/>
<path d="M977.8 90 C978.8 91.6 979.8 92.6 979.8 93.6 a2 2 0 0 1 -4 0 C975.8 92.6 976.8 91.6 977.8 90Z" fill="#444746"/>
<!-- merge icon (navy) -->
<g fill="none" stroke="#041e49" stroke-width="2">
<path d="M1045.6 86 H1041 V90.6 M1041 95.2 V100 H1045.6"/>
<path d="M1050.3 86 H1055 V90.6 M1055 95.2 V100 H1050.3"/>
<path d="M1039 92.8 H1043.5 M1057 92.8 H1052.5"/>
</g>
<path d="M1043 89.6 L1046.6 92.8 L1043 96 Z M1053 89.6 L1049.4 92.8 L1053 96 Z" fill="#041e49"/>
<!-- fx -->
<path d="M135 134.6 C133.6 133.2 131.4 133.6 130.8 136.3 L128.7 146.2 C128.2 148.5 126.6 149.1 125 148.2" fill="none" stroke="#7a7a7a" stroke-width="1.5"/>
<path d="M127.6 138.3 H134.2" fill="none" stroke="#7a7a7a" stroke-width="1.4"/>
<text x="129.6" y="146.8" font-family="Liberation Serif" font-size="21" fill="#7a7a7a">x</text>
<!-- decimal icons -->
<g fill="none" stroke="#444746" stroke-width="1.8">
<path d="M474.3 99 H466.5 M469 96.5 L466.3 99 L469 101.5"/>
<path d="M501.5 99 H509.6 M507 96.5 L509.8 99 L507 101.5"/>
</g>
</svg>

</body></html>
